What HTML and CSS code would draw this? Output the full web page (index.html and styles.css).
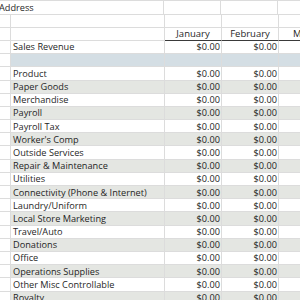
FILE: index.html
```html
<!DOCTYPE html>
<html>
<head>
<meta charset="utf-8">
<link rel="stylesheet" href="styles.css">
</head>
<body>
<div class="sheet">
  <div class="row"><div class="c ab"></div><div class="c num"></div><div class="c num"></div><div class="c num"></div></div>
  <div class="row"><div class="c ab addr">Address</div><div class="c num"></div><div class="c num"></div><div class="c num"></div></div>
  <div class="row"><div class="c a"></div><div class="c b"></div><div class="c num"></div><div class="c num"></div><div class="c num"></div></div>
  <div class="row"><div class="c a"></div><div class="c b"></div><div class="c num head">January</div><div class="c num head">February</div><div class="c num head">March</div></div>
  <div class="row"><div class="c a"></div><div class="c b">Sales Revenue</div><div class="c num">$0.00</div><div class="c num">$0.00</div><div class="c num"></div></div>
  <div class="row blue"><div class="c a"></div><div class="c b"></div><div class="c num"></div><div class="c num"></div><div class="c num"></div></div>
  <div class="row"><div class="c a"></div><div class="c b">Product</div><div class="c num">$0.00</div><div class="c num">$0.00</div><div class="c num"></div></div>
  <div class="row gray"><div class="c a"></div><div class="c b">Paper Goods</div><div class="c num">$0.00</div><div class="c num">$0.00</div><div class="c num"></div></div>
  <div class="row"><div class="c a"></div><div class="c b">Merchandise</div><div class="c num">$0.00</div><div class="c num">$0.00</div><div class="c num"></div></div>
  <div class="row gray"><div class="c a"></div><div class="c b">Payroll</div><div class="c num">$0.00</div><div class="c num">$0.00</div><div class="c num"></div></div>
  <div class="row"><div class="c a"></div><div class="c b">Payroll Tax</div><div class="c num">$0.00</div><div class="c num">$0.00</div><div class="c num"></div></div>
  <div class="row gray"><div class="c a"></div><div class="c b">Worker's Comp</div><div class="c num">$0.00</div><div class="c num">$0.00</div><div class="c num"></div></div>
  <div class="row"><div class="c a"></div><div class="c b">Outside Services</div><div class="c num">$0.00</div><div class="c num">$0.00</div><div class="c num"></div></div>
  <div class="row gray"><div class="c a"></div><div class="c b">Repair &amp; Maintenance</div><div class="c num">$0.00</div><div class="c num">$0.00</div><div class="c num"></div></div>
  <div class="row"><div class="c a"></div><div class="c b">Utilities</div><div class="c num">$0.00</div><div class="c num">$0.00</div><div class="c num"></div></div>
  <div class="row gray"><div class="c a"></div><div class="c b">Connectivity (Phone &amp; Internet)</div><div class="c num">$0.00</div><div class="c num">$0.00</div><div class="c num"></div></div>
  <div class="row"><div class="c a"></div><div class="c b">Laundry/Uniform</div><div class="c num">$0.00</div><div class="c num">$0.00</div><div class="c num"></div></div>
  <div class="row gray"><div class="c a"></div><div class="c b">Local Store Marketing</div><div class="c num">$0.00</div><div class="c num">$0.00</div><div class="c num"></div></div>
  <div class="row"><div class="c a"></div><div class="c b">Travel/Auto</div><div class="c num">$0.00</div><div class="c num">$0.00</div><div class="c num"></div></div>
  <div class="row gray"><div class="c a"></div><div class="c b">Donations</div><div class="c num">$0.00</div><div class="c num">$0.00</div><div class="c num"></div></div>
  <div class="row"><div class="c a"></div><div class="c b">Office</div><div class="c num">$0.00</div><div class="c num">$0.00</div><div class="c num"></div></div>
  <div class="row gray"><div class="c a"></div><div class="c b">Operations Supplies</div><div class="c num">$0.00</div><div class="c num">$0.00</div><div class="c num"></div></div>
  <div class="row"><div class="c a"></div><div class="c b">Other Misc Controllable</div><div class="c num">$0.00</div><div class="c num">$0.00</div><div class="c num"></div></div>
  <div class="row gray"><div class="c a"></div><div class="c b">Royalty</div><div class="c num">$0.00</div><div class="c num">$0.00</div><div class="c num"></div></div>
</div>
</body>
</html>
```
FILE: styles.css
```css
* { box-sizing: border-box; }
html, body { margin: 0; padding: 0; background: #fff; overflow: hidden; }
body { width: 300px; height: 300px; }
.sheet {
  margin-top: -11.8px;
  font-family: "Open Sans", "Noto Sans", sans-serif;
  font-size: 9.2px;
  color: #1f1f1f;
  width: 340px;
}
.row {
  display: flex;
  height: 13.2px;
}
.c {
  flex: none;
  height: 100%;
  border-right: 1px solid #dcdcdc;
  border-bottom: 1px solid #dcdcdc;
  display: flex;
  align-items: center;
  white-space: nowrap;
  overflow: visible;
  line-height: 1;
}
.a { width: 11px; }
.b { width: 154px; padding-left: 2px; }
.ab { width: 165px; padding-left: 0; margin-left: -1px; }
.num { width: 57px; justify-content: flex-end; padding-right: 1px; }
.head { justify-content: center; border-bottom: 1px solid #3a3a3a; padding-right: 0; font-size: 9.5px; }
.blue .b, .blue .num { background: #d4dee4; }
.gray .b, .gray .num { background: #e4e6e2; }
```
